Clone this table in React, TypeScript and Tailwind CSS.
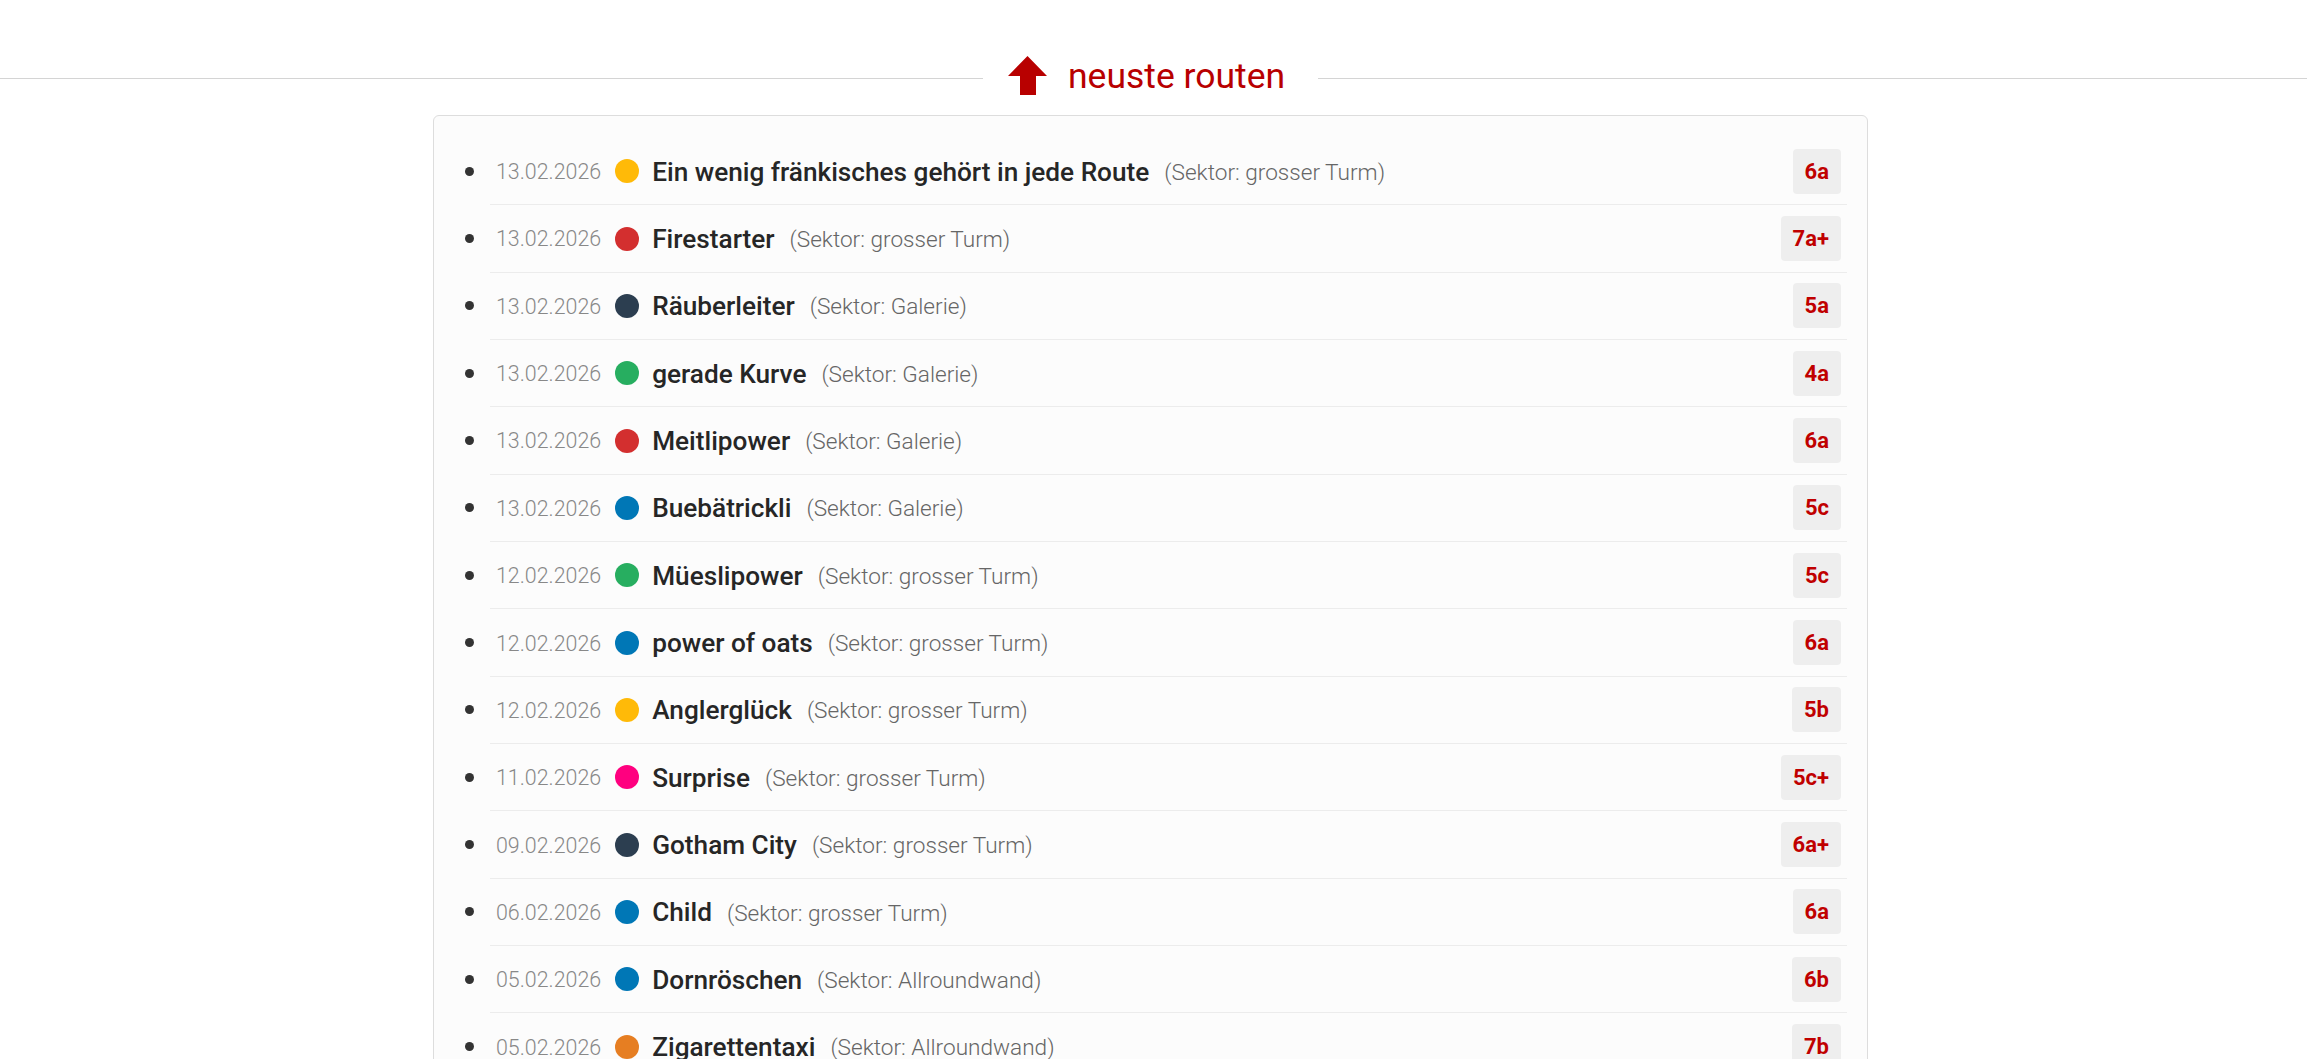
import React from 'react'

// neueste Routen: date, grip colour, name, sector, grade
const routes = [
  { date: '13.02.2026', color: '#ffba08', name: 'Ein wenig fränkisches gehört in jede Route', sector: 'grosser Turm', grade: '6a' },
  { date: '13.02.2026', color: '#d32f2f', name: 'Firestarter', sector: 'grosser Turm', grade: '7a+' },
  { date: '13.02.2026', color: '#2c3e50', name: 'Räuberleiter', sector: 'Galerie', grade: '5a' },
  { date: '13.02.2026', color: '#27ae60', name: 'gerade Kurve', sector: 'Galerie', grade: '4a' },
  { date: '13.02.2026', color: '#d32f2f', name: 'Meitlipower', sector: 'Galerie', grade: '6a' },
  { date: '13.02.2026', color: '#0077b6', name: 'Buebätrickli', sector: 'Galerie', grade: '5c' },
  { date: '12.02.2026', color: '#27ae60', name: 'Müeslipower', sector: 'grosser Turm', grade: '5c' },
  { date: '12.02.2026', color: '#0077b6', name: 'power of oats', sector: 'grosser Turm', grade: '6a' },
  { date: '12.02.2026', color: '#ffba08', name: 'Anglerglück', sector: 'grosser Turm', grade: '5b' },
  { date: '11.02.2026', color: '#ff007f', name: 'Surprise', sector: 'grosser Turm', grade: '5c+' },
  { date: '09.02.2026', color: '#2c3e50', name: 'Gotham City', sector: 'grosser Turm', grade: '6a+' },
  { date: '06.02.2026', color: '#0077b6', name: 'Child', sector: 'grosser Turm', grade: '6a' },
  { date: '05.02.2026', color: '#0077b6', name: 'Dornröschen', sector: 'Allroundwand', grade: '6b' },
  { date: '05.02.2026', color: '#e67e22', name: 'Zigarettentaxi', sector: 'Allroundwand', grade: '7b' },
]

function ArrowUp() {
  return (
    <svg width="39" height="39" viewBox="0 0 39 39" className="shrink-0">
      <polygon points="19.5,0 39,20 28,20 28,39 12,39 12,20 0,20" fill="#b80000" />
    </svg>
  )
}

export default function App() {
  return (
    <div className="min-h-screen bg-white font-['Roboto',sans-serif]">
      {/* Heading with rule */}
      <div className="flex items-center pt-[57px] h-[94px]">
        <div className="w-[983px] h-px bg-[#d4d4d4] mt-[6px]" />
        <div className="w-[335px] flex items-center gap-[21px] pl-[25px]">
          <ArrowUp />
          <h2 className="text-[35.5px] leading-none text-[#b80000] font-normal mt-[3px]">neuste routen</h2>
        </div>
        <div className="flex-1 h-px bg-[#d4d4d4] mt-[6px]" />
      </div>

      {/* Route card */}
      <div className="ml-[433px] w-[1435px] mt-[21px] bg-[#fcfcfc] border border-[#dddddd] rounded-[6px] pt-[22px] pb-[20px] px-[20px]">
        <ul className="pl-[36px]">
          {routes.map((r, i) => (
            <li key={i} className="border-b border-[#ececec]">
              <div className="flex items-center h-[66.35px]">
                <span className="-ml-[25px] w-[9px] h-[9px] rounded-full bg-[#333333] shrink-0" />
                <span className="ml-[22px] text-[21.4px] font-light text-[#888888] mt-[2px]">{r.date}</span>
                <span className="ml-[14px] w-[24px] h-[24px] rounded-full shrink-0" style={{ backgroundColor: r.color }} />
                <span className="ml-[13px] text-[26.2px] font-medium text-[#262626] mt-[2px]">{r.name}</span>
                <span className="ml-[15px] text-[22.6px] text-[#666666] font-light mt-[3px]">(Sektor: {r.sector})</span>
                <span className="ml-auto mr-[6px] h-[45px] px-[12px] flex items-center rounded-[4px] bg-[#eeeeee] text-[22px] font-bold text-[#c00000]">
                  {r.grade}
                </span>
              </div>
            </li>
          ))}
        </ul>
      </div>
    </div>
  )
}
